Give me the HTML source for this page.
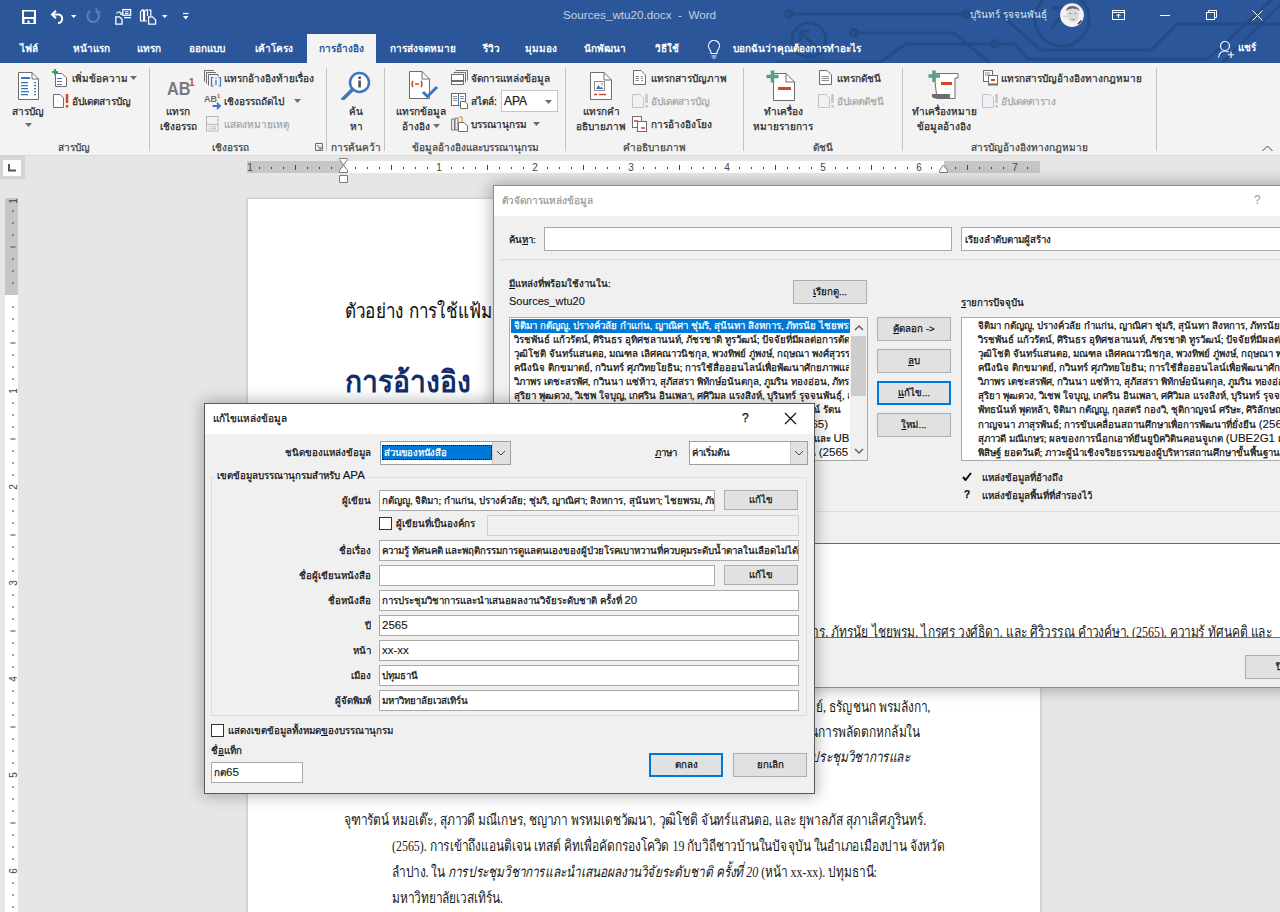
<!DOCTYPE html>
<html><head><meta charset="utf-8">
<style>
*{box-sizing:border-box;margin:0;padding:0}
html,body{width:1280px;height:912px;overflow:hidden}
body{position:relative;-webkit-text-stroke-width:0.25px;background:#e6e6e6;font-family:"Liberation Sans",sans-serif;font-size:11px;color:#222}
.a{position:absolute;white-space:nowrap}
#title{left:0;top:0;width:1280px;height:63px;background:#2b579a}
.tab{position:absolute;top:42px;color:#fff;font-size:10px;line-height:14px;font-weight:bold;-webkit-text-stroke-width:0}
#ribbon{left:0;top:63px;width:1280px;height:93px;background:#f3f3f3;border-bottom:1px solid #d6d6d6}
.sep{position:absolute;top:68px;width:1px;height:83px;background:#c4c4c4}
.rt{position:absolute;font-size:10px;line-height:13px;color:#262626;white-space:nowrap}
.gl{position:absolute;top:141px;font-size:10px;line-height:13px;color:#444;white-space:nowrap;transform:translateX(-50%)}
.cl{transform:translateX(-50%);text-align:center}
.dis{color:#a6a6a6}
.dt{position:absolute;white-space:nowrap;font-family:"Liberation Serif",serif;font-size:15px;line-height:20px;color:#1a1a1a;-webkit-text-stroke-width:0;transform:scaleX(.795);transform-origin:0 0}
.dtr{position:absolute;white-space:nowrap;font-family:"Liberation Serif",serif;font-size:15px;line-height:20px;color:#1a1a1a;-webkit-text-stroke-width:0;transform:scaleX(.795);transform-origin:100% 0}

.dlg{position:absolute;background:#f0f0f0;border:1px solid #8c8c8c;box-shadow:0 0 14px 2px rgba(0,0,0,.28)}
.dt9{position:absolute;white-space:nowrap;font-size:9.7px;line-height:13px;color:#111}
.tb{position:absolute;background:#fff;border:1px solid #a9a9a9}
.btn{position:absolute;background:#e1e1e1;border:1px solid #adadad;font-size:9.7px;line-height:13px;color:#111;text-align:center;white-space:nowrap}
.lst{position:absolute;background:#fff;border:1px solid #a9a9a9;overflow:hidden}
.row{position:absolute;left:0;height:14px;font-size:9.7px;line-height:14px;white-space:nowrap;color:#111}
u{text-decoration:underline}
.lat{font-size:11.5px;-webkit-text-stroke-width:0.1px}

</style></head><body>

<!-- TITLE BAR -->
<div id="title" class="a"></div>
<svg class="a" style="left:0;top:0" width="1280" height="63">
 <g fill="none" stroke="#234b86" stroke-width="3">
  <path d="M789 14 H966"/>
  <circle cx="789" cy="14" r="3.5"/><circle cx="966" cy="14" r="3.5"/>
  <path d="M854 33 H954 L990 63"/>
  <circle cx="854" cy="33" r="3.5"/>
  <path d="M776 62 H880 L906 44 H995"/>
  <circle cx="995" cy="44" r="3.5"/>
  <circle cx="809" cy="40" r="17"/>
  <path d="M800 31 L818 49 M800 31 V41 M800 31 H810"/>
  <path d="M966 14 H1000 L1041 50 H1151 L1177 24 H1280"/>
  <path d="M995 44 H1015 L1028 59 H1208 L1280 -8"/>
  <path d="M1222 63 L1288 -3"/>
  <circle cx="1062" cy="19" r="27"/>
  <path d="M1052 28 L1068 8 M1052 8 H1068 V22"/>
 </g>
</svg>
<!-- QAT -->
<svg class="a" style="left:0;top:0" width="200" height="34">
 <g fill="none" stroke="#fff" stroke-width="1.6">
 </g>
 <rect x="22" y="10" width="14" height="14" fill="#fff"/>
 <rect x="24" y="11.5" width="10" height="5.5" fill="#2b579a"/>
 <rect x="24.5" y="19" width="9" height="4" fill="#2b579a"/>
 <rect x="27.5" y="20.5" width="2" height="2.5" fill="#fff"/>
 <g fill="none" stroke="#fff" stroke-width="2">
  <path d="M52.5 14.5 H58.5 A4.3 4.3 0 0 1 58.5 23 H58"/>
  <path d="M56 10.8 L52 14.5 L56 18.2"/>
 </g>
 <path d="M71 15 H76.5 L73.75 18Z" fill="#fff"/>
 <g fill="none" stroke="#5b7fb8" stroke-width="2"><path d="M97 11.8 A5.8 5.8 0 1 1 90.5 11"/><path d="M96.5 8.3 V12.3 H100.5"/></g>
 <g>
 <g fill="none" stroke="#fff" stroke-width="1.2">
  <path d="M115.8 16.8 H119.5 L122 19.3 V24.2 H115.8Z" stroke-width="1.3"/>
  <rect x="122.8" y="9.6" width="7.8" height="5.6" stroke-width="1.3"/>
  <path d="M125 11.8 H128.5 M125 13.5 H128.5 M124 17.6 H131" stroke-width="1.1"/>
  <path d="M116.2 13.5 Q118.5 10.5 121 13.2" stroke-width="1.1"/>
  <path d="M119.8 13.8 L121.3 14.6 L121.8 12.6" stroke-width="1"/>
  <path d="M140.5 12 Q142 9.5 143.5 10 V21 H140.5Z M144.5 11 Q146 9.5 147.5 10 V16 M144.5 11 V21 H147" stroke-width="1.2"/>
  <path d="M148.5 10 H150.8 V16" stroke-width="1.2"/>
  <path d="M148.6 16.8 H152.5 L155.6 19.9 V24.2 H148.6Z" stroke-width="1.3"/>
 </g>
 <path d="M162 15 H167.5 L164.75 18Z" fill="#fff"/>
 <path d="M183 13.5 H188.5" stroke="#fff" stroke-width="1.2"/><path d="M183 16 H188.5 L185.75 19.5Z" fill="#fff"/>
</svg>
<!-- window controls -->
<svg class="a" style="left:1100px;top:0" width="180" height="34">
 <g fill="none" stroke="#fff" stroke-width="1">
  <rect x="12.5" y="10.5" width="12" height="9"/><path d="M12.5 12.5 H24.5 M18.5 18 V14 M16.5 16 L18.5 14 L20.5 16"/>
  <path d="M60 15.5 H70"/>
  <rect x="106.5" y="12.5" width="8" height="7"/><path d="M108.5 12.5 V10.5 H116.5 V17.5 H114.5"/>
  <path d="M152.5 10.5 L162.5 20.5 M162.5 10.5 L152.5 20.5"/>
 </g>
</svg>
<div class="a" style="left:970px;top:8px;font-size:10px;line-height:14px;color:#dce4f0;-webkit-text-stroke-width:0">บุรินทร์ รุจจนพันธุ์</div>
<svg class="a" style="left:1060px;top:3px" width="25" height="25">
 <circle cx="12" cy="12.1" r="11.9" fill="#f2f2f2"/>
 <ellipse cx="13" cy="12" rx="6" ry="7" fill="#d9d9d9"/>
 <path d="M6 8 Q7 3 12 3 Q18 3 20 8 Q17 5 12 5.5 Q8 6 6 8Z" fill="#6a6a6a"/>
 <path d="M9 10.5 H11.5 M14 10.5 H16.5 M11 16.5 H15" stroke="#9a9a9a" stroke-width="1"/>
 <path d="M3 14 Q5 12 7 14" stroke="#c8c8c8" stroke-width="1" fill="none"/>
 <path d="M18 21 L21.5 17.5" stroke="#222" stroke-width="1.3"/>
</svg>
<svg class="a" style="left:705.5px;top:40px" width="16" height="20">
 <g fill="none" stroke="#fff" stroke-width="1.1"><path d="M5 13.5 Q5 11 3.5 9 A5.5 5.5 0 1 1 12.5 9 Q11 11 11 13.5 Z"/><path d="M5.5 16 H10.5 M6.5 18 H9.5"/></g>
</svg>
<svg class="a" style="left:1217px;top:40px" width="19" height="19">
 <g fill="none" stroke="#fff" stroke-width="1.2"><circle cx="8" cy="6" r="4.5"/><path d="M1.5 17.5 Q2.5 11 8 11 Q10 11 11.5 12"/><path d="M14 11.5 V18 M10.8 14.75 H17.2"/></g>
</svg>
<div class="a" style="left:563px;top:8px;font-size:11.7px;line-height:14px;color:#c3cee2;-webkit-text-stroke-width:0">Sources_wtu20.docx&nbsp; - &nbsp;Word</div>

<!-- TAB ROW -->
<div class="a" style="left:307px;top:34px;width:69px;height:30px;background:#f3f3f3"></div>
<div class="tab" style="left:20px">ไฟล์</div>
<div class="tab" style="left:73px">หน้าแรก</div>
<div class="tab" style="left:137px">แทรก</div>
<div class="tab" style="left:189px">ออกแบบ</div>
<div class="tab" style="left:255px">เค้าโครง</div>
<div class="tab" style="left:319px;color:#2b579a">การอ้างอิง</div>
<div class="tab" style="left:390px">การส่งจดหมาย</div>
<div class="tab" style="left:483px">รีวิว</div>
<div class="tab" style="left:525px">มุมมอง</div>
<div class="tab" style="left:584px">นักพัฒนา</div>
<div class="tab" style="left:655px">วิธีใช้</div>
<div class="tab" style="left:733px">บอกฉันว่าคุณต้องการทำอะไร</div>
<div class="tab" style="left:1238px;top:41px;font-weight:bold">แชร์</div>

<!-- RIBBON -->
<div id="ribbon" class="a"></div>
<div class="sep" style="left:149px"></div>
<div class="sep" style="left:326px"></div>
<div class="sep" style="left:384px"></div>
<div class="sep" style="left:565px"></div>
<div class="sep" style="left:743px"></div>
<div class="sep" style="left:902px"></div>
<div class="sep" style="left:1156px"></div>

<!-- group: TOC -->
<svg class="a" style="left:17px;top:71px" width="24" height="30">
 <path d="M1.5 1.5 H15 L21.5 8 V28.5 H1.5 Z" fill="#fff" stroke="#6d6d6d"/>
 <path d="M15 1.5 V8 H21.5" fill="none" stroke="#6d6d6d"/>
 <g fill="#3a77bd"><rect x="4" y="6" width="9" height="2"/><rect x="4" y="11" width="7" height="1.3"/><rect x="4" y="14" width="7" height="1.3"/><rect x="4" y="17" width="7" height="1.3"/><rect x="4" y="20" width="8" height="1.3"/><rect x="4" y="23" width="7" height="1.3"/>
 <rect x="17" y="11" width="2" height="1.3"/><rect x="17" y="14" width="2" height="1.3"/><rect x="17" y="17" width="2" height="1.3"/><rect x="17" y="20" width="2" height="1.3"/><rect x="17" y="23" width="2" height="1.3"/></g>
</svg>
<div class="rt cl" style="left:28px;top:105px">สารบัญ</div>
<svg class="a" style="left:25px;top:123px" width="7" height="4"><path d="M0 0 H7 L3.5 4Z" fill="#6d6d6d"/></svg>
<svg class="a" style="left:52px;top:69px" width="16" height="18">
 <path d="M3.5 4.5 H10 L14.5 9 V17.5 H3.5 Z" fill="#fff" stroke="#6d6d6d"/>
 <path d="M0 3 H6 M3 0 V6" stroke="#3a9a6e" stroke-width="2"/>
 <g fill="#3a77bd"><rect x="5" y="9" width="5" height="1"/><rect x="5" y="12" width="5" height="1"/><rect x="5" y="15" width="5" height="1"/></g>
</svg>
<div class="rt" style="left:72px;top:71.5px">เพิ่มข้อความ</div>
<svg class="a" style="left:130px;top:76px" width="7" height="4"><path d="M0 0 H7 L3.5 4Z" fill="#6d6d6d"/></svg>
<svg class="a" style="left:52px;top:93px" width="18" height="16">
 <path d="M1.5 1.5 H8 L11.5 5 V14.5 H1.5 Z" fill="#fff" stroke="#6d6d6d"/>
 <path d="M15 1 V10" stroke="#d24726" stroke-width="2.5"/><rect x="13.8" y="12" width="2.5" height="2.5" fill="#d24726"/>
</svg>
<div class="rt" style="left:72px;top:94.5px">อัปเดตสารบัญ</div>
<div class="gl" style="left:74px">สารบัญ</div>

<!-- group: footnotes -->
<div class="a" style="left:167px;top:78.5px;font-size:18.5px;font-weight:bold;color:#7a7a7a;line-height:20px;-webkit-text-stroke-width:0;transform:scaleX(.88);transform-origin:0 0">AB</div>
<div class="a" style="left:189px;top:77px;font-size:10px;font-weight:bold;color:#d24726;line-height:11px;-webkit-text-stroke-width:0">1</div>
<div class="rt cl" style="left:178px;top:105px">แทรก</div>
<div class="rt cl" style="left:178px;top:119.5px">เชิงอรรถ</div>
<svg class="a" style="left:200px;top:66px" width="24" height="24">
 <path d="M4.5 15.5 V4.5 H14 M6.5 17.5 V6.5 H16 M8.5 19.5 V8.5 H18 V10.5" fill="none" stroke="#6d6d6d" stroke-width="1"/>
 <path d="M13.5 11.5 H11.5 V20 H13.5 M18.5 11.5 H20.5 V20 H18.5" fill="none" stroke="#3a77bd" stroke-width="1.2"/>
 <path d="M16 14 V19 M16 12 V13" stroke="#3a77bd" stroke-width="1.3"/>
</svg>
<div class="rt" style="left:223.5px;top:71.5px">แทรกอ้างอิงท้ายเรื่อง</div>
<div class="a" style="left:204px;top:94px;font-size:9px;font-weight:bold;color:#6d6d6d;line-height:10px;-webkit-text-stroke-width:0">AB</div>
<div class="a" style="left:217px;top:92.5px;font-size:6px;font-weight:bold;color:#d24726;line-height:7px;-webkit-text-stroke-width:0">1</div>
<svg class="a" style="left:212px;top:102px" width="10" height="8"><path d="M0.5 4 H8 M5 1 L8 4 L5 7" fill="none" stroke="#3a77bd" stroke-width="1.8"/></svg>
<div class="rt" style="left:223.5px;top:94.5px">เชิงอรรถถัดไป</div>
<svg class="a" style="left:294px;top:99px" width="7" height="4"><path d="M0 0 H7 L3.5 4Z" fill="#6d6d6d"/></svg>
<svg class="a" style="left:205px;top:116px" width="14" height="16">
 <rect x="1.5" y="0.5" width="11.5" height="14.5" fill="#f3eff5" stroke="#b8b8b8"/>
 <path d="M1.5 8.5 H13" stroke="#b8b8b8"/>
 <path d="M3.5 10.8 H4.5 M3.5 12.8 H4.5 M6 10.8 H11 M6 12.8 H11" stroke="#b8b8b8"/>
</svg>
<div class="rt dis" style="left:223.5px;top:117.5px">แสดงหมายเหตุ</div>
<div class="gl" style="left:230px">เชิงอรรถ</div>
<svg class="a" style="left:315px;top:143px" width="8" height="8"><path d="M0.5 0.5 H7.5 V7.5 H0.5Z M2 2 L6 6 M6 3.5 V6 H3.5" fill="none" stroke="#6d6d6d"/></svg>

<!-- group: research -->
<svg class="a" style="left:340px;top:71px" width="31" height="29">
 <circle cx="19.5" cy="11.5" r="9.5" fill="#fff" stroke="#3a77bd" stroke-width="2.5"/>
 <path d="M12.5 18.5 L3 28" stroke="#3a77bd" stroke-width="3.5" stroke-linecap="round"/>
 <rect x="18.3" y="9.5" width="2.6" height="7" fill="#505050"/><rect x="18.3" y="5.5" width="2.6" height="2.6" fill="#505050"/>
</svg>
<div class="rt cl" style="left:356px;top:105px">ค้น</div>
<div class="rt cl" style="left:356px;top:119.5px">หา</div>
<div class="gl" style="left:355.5px">การค้นคว้า</div>

<!-- group: citations -->
<svg class="a" style="left:409px;top:71px" width="30" height="30">
 <path d="M0.5 0.5 H13 L20.5 8 V27.5 H0.5 Z" fill="#fff" stroke="#6d6d6d"/>
 <path d="M13 0.5 V8 H20.5" fill="none" stroke="#6d6d6d"/>
 <path d="M4 10 Q2 13 4 16 M12 10 Q14 13 12 16 M6 13 H10" fill="none" stroke="#d24726" stroke-width="1.5"/>
 <path d="M14 21 L18.5 25.5 L28 16" fill="none" stroke="#3a77bd" stroke-width="3"/>
</svg>
<div class="rt cl" style="left:421px;top:105px">แทรกข้อมูล</div>
<div class="rt cl" style="left:416px;top:119.5px">อ้างอิง</div>
<svg class="a" style="left:433px;top:124px" width="7" height="4"><path d="M0 0 H7 L3.5 4Z" fill="#6d6d6d"/></svg>
<svg class="a" style="left:451px;top:70px" width="17" height="16">
 <path d="M4.5 0.5 H16.5 V10.5 M2.5 2.5 H14.5 V12.5" fill="none" stroke="#6d6d6d"/>
 <rect x="0.5" y="4.5" width="12" height="10" fill="#fff" stroke="#6d6d6d"/>
 <path d="M1 11 H12" stroke="#6d6d6d" stroke-width="2"/>
</svg>
<div class="rt" style="left:471px;top:71.5px">จัดการแหล่งข้อมูล</div>
<svg class="a" style="left:451px;top:93px" width="17" height="16">
 <rect x="0.5" y="0.5" width="7" height="12" fill="#fff" stroke="#3a77bd"/>
 <rect x="7.5" y="0.5" width="7" height="12" fill="#fff" stroke="#3a77bd"/>
 <path d="M2 3.5 H6 M2 5.5 H6 M2 7.5 H6 M9 3.5 H13 M9 5.5 H13" stroke="#909090"/>
 <path d="M9.5 8.5 H14 L16.5 11 V15.5 H9.5Z" fill="#fff" stroke="#6d6d6d"/>
</svg>
<div class="rt" style="left:471px;top:94.5px">สไตล์:</div>
<div class="a" style="left:501px;top:90px;width:57px;height:22px;background:#fff;border:1px solid #c6c6c6"></div>
<div class="a" style="left:504px;top:94px;font-size:12px;line-height:14px;color:#222">APA</div>
<svg class="a" style="left:545px;top:100px" width="7" height="4"><path d="M0 0 H7 L3.5 4Z" fill="#6d6d6d"/></svg>
<svg class="a" style="left:451px;top:116px" width="17" height="16">
 <path d="M0.5 3 H3.5 V14 H0.5Z M4 2 H7 V14 H4Z" fill="#e8e8e8" stroke="#7a7a7a"/>
 <path d="M8 0.5 L11 1.5 V6" stroke="#e8a33d" stroke-width="1.5" fill="none"/>
 <path d="M7.5 6.5 H13 L16.5 10 V15.5 H7.5Z" fill="#fff" stroke="#6d6d6d"/>
</svg>
<div class="rt" style="left:471px;top:117.5px">บรรณานุกรม</div>
<svg class="a" style="left:533px;top:122px" width="7" height="4"><path d="M0 0 H7 L3.5 4Z" fill="#6d6d6d"/></svg>
<div class="gl" style="left:475px">ข้อมูลอ้างอิงและบรรณานุกรม</div>

<!-- group: captions -->
<svg class="a" style="left:590px;top:72px" width="23" height="29">
 <path d="M0.5 0.5 H14 L21.5 8 V27.5 H0.5 Z" fill="#fff" stroke="#6d6d6d"/>
 <path d="M14 0.5 V8 H21.5" fill="none" stroke="#6d6d6d"/>
 <rect x="4.5" y="9.5" width="10" height="9" fill="#fff" stroke="#909090"/>
 <path d="M6 17 L8.5 13 L11 17Z M9.5 17 L11.5 14.5 L13.5 17Z" fill="#3a77bd"/>
 <circle cx="12" cy="12" r="1.2" fill="#e8b84a"/>
 <path d="M4 22.5 H7 M9 22.5 H16" stroke="#d24726" stroke-width="1.5"/>
</svg>
<div class="rt cl" style="left:601px;top:105px">แทรกคำ</div>
<div class="rt cl" style="left:601px;top:119.5px">อธิบายภาพ</div>
<svg class="a" style="left:633px;top:70px" width="14" height="16">
 <path d="M0.5 0.5 H8 L12.5 5 V14.5 H0.5 Z" fill="#fff" stroke="#6d6d6d"/>
 <path d="M2.5 6.5 H6 M2.5 8.5 H6 M2.5 10.5 H6 M8 6.5 H10 M8 8.5 H10 M8 10.5 H10" stroke="#909090"/>
</svg>
<div class="rt" style="left:651px;top:71.5px">แทรกสารบัญภาพ</div>
<svg class="a" style="left:632px;top:93px" width="17" height="16">
 <path d="M0.5 1.5 H8 L11.5 5 V14.5 H0.5 Z" fill="#f3f0f5" stroke="#c4c4c4"/>
 <path d="M14.5 1 V10" stroke="#c4c4c4" stroke-width="2.5"/><rect x="13.3" y="12" width="2.5" height="2.5" fill="#c4c4c4"/>
</svg>
<div class="rt dis" style="left:651px;top:94.5px">อัปเดตสารบัญ</div>
<svg class="a" style="left:632px;top:116px" width="16" height="16">
 <rect x="0.5" y="0.5" width="9" height="11" fill="#fff" stroke="#6d6d6d"/>
 <rect x="5.5" y="5.5" width="9" height="10" fill="#fff" stroke="#6d6d6d"/>
 <path d="M2 5 H6 M9 12 H13" stroke="#d24726" stroke-width="1.5"/>
</svg>
<div class="rt" style="left:651px;top:117.5px">การอ้างอิงโยง</div>
<div class="gl" style="left:654px">คำอธิบายภาพ</div>

<!-- group: index -->
<svg class="a" style="left:766px;top:70px" width="30" height="31">
 <path d="M7.5 3.5 H20 L28.5 12 V30.5 H7.5 Z" fill="#fff" stroke="#6d6d6d"/>
 <path d="M20 3.5 V12 H28.5" fill="none" stroke="#6d6d6d"/>
 <path d="M0.5 6.5 H12.5 M6.5 0.5 V12.5" stroke="#5a9e86" stroke-width="3.5"/>
 <rect x="12" y="17" width="13" height="3" fill="#d24726"/>
</svg>
<div class="rt cl" style="left:783px;top:105px">ทำเครื่อง</div>
<div class="rt cl" style="left:783px;top:119.5px">หมายรายการ</div>
<svg class="a" style="left:819px;top:70px" width="14" height="16">
 <path d="M0.5 0.5 H8 L12.5 5 V14.5 H0.5 Z" fill="#fff" stroke="#6d6d6d"/>
 <path d="M2.5 6.5 H10 M2.5 8.5 H10 M2.5 10.5 H10" stroke="#909090"/>
</svg>
<div class="rt" style="left:837px;top:71.5px">แทรกดัชนี</div>
<svg class="a" style="left:818px;top:93px" width="17" height="16">
 <path d="M0.5 1.5 H8 L11.5 5 V14.5 H0.5 Z" fill="#f3f0f5" stroke="#c4c4c4"/>
 <path d="M14.5 1 V10" stroke="#c4c4c4" stroke-width="2.5"/><rect x="13.3" y="12" width="2.5" height="2.5" fill="#c4c4c4"/>
</svg>
<div class="rt dis" style="left:837px;top:94.5px">อัปเดตดัชนี</div>
<div class="gl" style="left:823px">ดัชนี</div>

<!-- group: table of authorities -->
<svg class="a" style="left:928px;top:70px" width="32" height="30">
 <path d="M6 3.5 H30 V8 H27 V28.5 H9 Z" fill="#fff" stroke="#6d6d6d"/>
 <path d="M4 24 H22 V28.5 H8 Q4 28.5 4 26Z" fill="#6d6d6d"/>
 <path d="M0.5 6 H12 M6 0.5 V12" stroke="#5a9e86" stroke-width="3.5"/>
 <rect x="13" y="12" width="11" height="3" fill="#d24726"/>
</svg>
<div class="rt cl" style="left:944px;top:105px">ทำเครื่องหมาย</div>
<div class="rt cl" style="left:944px;top:119.5px">ข้อมูลอ้างอิง</div>
<svg class="a" style="left:983px;top:70px" width="16" height="16">
 <rect x="0.5" y="0.5" width="9" height="11" fill="#fff" stroke="#6d6d6d"/>
 <path d="M2 3 H7 M2 5 H7" stroke="#909090"/>
 <rect x="5.5" y="5.5" width="9" height="9" fill="#fff" stroke="#6d6d6d"/>
 <rect x="8" y="9" width="4" height="2" fill="#d24726"/>
 <path d="M5 14.5 H15" stroke="#6d6d6d" stroke-width="2"/>
</svg>
<div class="rt" style="left:1001px;top:71.5px">แทรกสารบัญอ้างอิงทางกฎหมาย</div>
<svg class="a" style="left:982px;top:93px" width="17" height="16">
 <path d="M0.5 1.5 H8 L11.5 5 V14.5 H0.5 Z" fill="#f3f0f5" stroke="#c4c4c4"/>
 <path d="M14.5 1 V10" stroke="#c4c4c4" stroke-width="2.5"/><rect x="13.3" y="12" width="2.5" height="2.5" fill="#c4c4c4"/>
</svg>
<div class="rt dis" style="left:1001px;top:94.5px">อัปเดตตาราง</div>
<div class="gl" style="left:1029px">สารบัญอ้างอิงทางกฎหมาย</div>
<svg class="a" style="left:1262px;top:145px" width="11" height="7"><path d="M0.5 6 L5.5 1 L10.5 6" fill="none" stroke="#444" stroke-width="1"/></svg>

<!-- DOC AREA -->
<div class="a" style="left:0;top:155px;width:25px;height:24px;background:#d4d4d4"></div>
<div class="a" style="left:3px;top:160px;width:18px;height:16px;background:#fff"></div>
<svg class="a" style="left:8px;top:164px" width="9" height="8"><path d="M1 0 V6.5 H8" fill="none" stroke="#555" stroke-width="2"/></svg>
<svg class="a" style="left:0;top:0" width="1280" height="912">
 <rect x="247" y="161" width="793" height="12" fill="#c6c6c6"/>
 <rect x="343" y="161" width="601" height="12" fill="#fff"/>
 <rect x="5" y="198" width="13" height="714" fill="#fff"/>
 <rect x="5" y="198" width="13" height="97" fill="#c6c6c6"/>
 <g fill="#444" font-family="Liberation Sans" style="-webkit-text-stroke-width:0">
<text x="250" y="171" font-size="10" text-anchor="middle">1</text>
<text x="13" y="201" font-size="10" text-anchor="middle" transform="rotate(-90 13 201)" dominant-baseline="central">1</text>
<rect x="259" y="167" width="1" height="2"/>
<rect x="271" y="167" width="1" height="2"/>
<rect x="283" y="167" width="1" height="2"/>
<rect x="295" y="165" width="1" height="5"/>
<rect x="307" y="167" width="1" height="2"/>
<rect x="319" y="167" width="1" height="2"/>
<rect x="331" y="167" width="1" height="2"/>
<rect x="355" y="167" width="1" height="2"/>
<rect x="367" y="167" width="1" height="2"/>
<rect x="379" y="167" width="1" height="2"/>
<rect x="391" y="165" width="1" height="5"/>
<rect x="403" y="167" width="1" height="2"/>
<rect x="415" y="167" width="1" height="2"/>
<rect x="427" y="167" width="1" height="2"/>
<text x="439" y="171" font-size="10" text-anchor="middle">1</text>
<rect x="451" y="167" width="1" height="2"/>
<rect x="463" y="167" width="1" height="2"/>
<rect x="475" y="167" width="1" height="2"/>
<rect x="487" y="165" width="1" height="5"/>
<rect x="499" y="167" width="1" height="2"/>
<rect x="511" y="167" width="1" height="2"/>
<rect x="523" y="167" width="1" height="2"/>
<text x="535" y="171" font-size="10" text-anchor="middle">2</text>
<rect x="547" y="167" width="1" height="2"/>
<rect x="559" y="167" width="1" height="2"/>
<rect x="571" y="167" width="1" height="2"/>
<rect x="583" y="165" width="1" height="5"/>
<rect x="595" y="167" width="1" height="2"/>
<rect x="607" y="167" width="1" height="2"/>
<rect x="619" y="167" width="1" height="2"/>
<text x="631" y="171" font-size="10" text-anchor="middle">3</text>
<rect x="643" y="167" width="1" height="2"/>
<rect x="655" y="167" width="1" height="2"/>
<rect x="667" y="167" width="1" height="2"/>
<rect x="679" y="165" width="1" height="5"/>
<rect x="691" y="167" width="1" height="2"/>
<rect x="703" y="167" width="1" height="2"/>
<rect x="715" y="167" width="1" height="2"/>
<text x="727" y="171" font-size="10" text-anchor="middle">4</text>
<rect x="739" y="167" width="1" height="2"/>
<rect x="751" y="167" width="1" height="2"/>
<rect x="763" y="167" width="1" height="2"/>
<rect x="775" y="165" width="1" height="5"/>
<rect x="787" y="167" width="1" height="2"/>
<rect x="799" y="167" width="1" height="2"/>
<rect x="811" y="167" width="1" height="2"/>
<text x="823" y="171" font-size="10" text-anchor="middle">5</text>
<rect x="835" y="167" width="1" height="2"/>
<rect x="847" y="167" width="1" height="2"/>
<rect x="859" y="167" width="1" height="2"/>
<rect x="871" y="165" width="1" height="5"/>
<rect x="883" y="167" width="1" height="2"/>
<rect x="895" y="167" width="1" height="2"/>
<rect x="907" y="167" width="1" height="2"/>
<text x="919" y="171" font-size="10" text-anchor="middle">6</text>
<rect x="931" y="167" width="1" height="2"/>
<rect x="943" y="167" width="1" height="2"/>
<rect x="955" y="167" width="1" height="2"/>
<rect x="967" y="165" width="1" height="5"/>
<rect x="979" y="167" width="1" height="2"/>
<rect x="991" y="167" width="1" height="2"/>
<rect x="1003" y="167" width="1" height="2"/>
<text x="1015" y="171" font-size="10" text-anchor="middle">7</text>
<rect x="1027" y="167" width="1" height="2"/>
<rect x="12" y="210.5" width="2" height="1"/>
<rect x="12" y="222.5" width="2" height="1"/>
<rect x="12" y="234.5" width="2" height="1"/>
<rect x="10.5" y="246.5" width="5" height="1"/>
<rect x="12" y="258.5" width="2" height="1"/>
<rect x="12" y="270.5" width="2" height="1"/>
<rect x="12" y="282.5" width="2" height="1"/>
<rect x="12" y="306.5" width="2" height="1"/>
<rect x="12" y="318.5" width="2" height="1"/>
<rect x="12" y="330.5" width="2" height="1"/>
<rect x="10.5" y="342.5" width="5" height="1"/>
<rect x="12" y="354.5" width="2" height="1"/>
<rect x="12" y="366.5" width="2" height="1"/>
<rect x="12" y="378.5" width="2" height="1"/>
<text x="13" y="391" font-size="10" text-anchor="middle" transform="rotate(-90 13 391)" dominant-baseline="central">1</text>
<rect x="12" y="402.5" width="2" height="1"/>
<rect x="12" y="414.5" width="2" height="1"/>
<rect x="12" y="426.5" width="2" height="1"/>
<rect x="10.5" y="438.5" width="5" height="1"/>
<rect x="12" y="450.5" width="2" height="1"/>
<rect x="12" y="462.5" width="2" height="1"/>
<rect x="12" y="474.5" width="2" height="1"/>
<text x="13" y="487" font-size="10" text-anchor="middle" transform="rotate(-90 13 487)" dominant-baseline="central">2</text>
<rect x="12" y="498.5" width="2" height="1"/>
<rect x="12" y="510.5" width="2" height="1"/>
<rect x="12" y="522.5" width="2" height="1"/>
<rect x="10.5" y="534.5" width="5" height="1"/>
<rect x="12" y="546.5" width="2" height="1"/>
<rect x="12" y="558.5" width="2" height="1"/>
<rect x="12" y="570.5" width="2" height="1"/>
<text x="13" y="583" font-size="10" text-anchor="middle" transform="rotate(-90 13 583)" dominant-baseline="central">3</text>
<rect x="12" y="594.5" width="2" height="1"/>
<rect x="12" y="606.5" width="2" height="1"/>
<rect x="12" y="618.5" width="2" height="1"/>
<rect x="10.5" y="630.5" width="5" height="1"/>
<rect x="12" y="642.5" width="2" height="1"/>
<rect x="12" y="654.5" width="2" height="1"/>
<rect x="12" y="666.5" width="2" height="1"/>
<text x="13" y="679" font-size="10" text-anchor="middle" transform="rotate(-90 13 679)" dominant-baseline="central">4</text>
<rect x="12" y="690.5" width="2" height="1"/>
<rect x="12" y="702.5" width="2" height="1"/>
<rect x="12" y="714.5" width="2" height="1"/>
<rect x="10.5" y="726.5" width="5" height="1"/>
<rect x="12" y="738.5" width="2" height="1"/>
<rect x="12" y="750.5" width="2" height="1"/>
<rect x="12" y="762.5" width="2" height="1"/>
<text x="13" y="775" font-size="10" text-anchor="middle" transform="rotate(-90 13 775)" dominant-baseline="central">5</text>
<rect x="12" y="786.5" width="2" height="1"/>
<rect x="12" y="798.5" width="2" height="1"/>
<rect x="12" y="810.5" width="2" height="1"/>
<rect x="10.5" y="822.5" width="5" height="1"/>
<rect x="12" y="834.5" width="2" height="1"/>
<rect x="12" y="846.5" width="2" height="1"/>
<rect x="12" y="858.5" width="2" height="1"/>
<text x="13" y="871" font-size="10" text-anchor="middle" transform="rotate(-90 13 871)" dominant-baseline="central">6</text>
<rect x="12" y="882.5" width="2" height="1"/>
<rect x="12" y="894.5" width="2" height="1"/>
<rect x="12" y="906.5" width="2" height="1"/>
 </g>
 <path d="M339.5 158.5 H347.5 V159.5 L343.5 165 L339.5 159.5Z M343.5 165 L347.5 170.5 V172.5 H339.5 V170.5Z M339.5 175.5 H347.5 V182.5 H339.5Z" fill="#fff" stroke="#7a7a7a"/>
 <path d="M943.5 165 L947.5 170.5 V172.5 H939.5 V170.5Z" fill="#fff" stroke="#7a7a7a"/>
</svg>
<div class="a" style="left:247px;top:198px;width:794px;height:714px;background:#fff;border:1px solid #d0d0d0;border-bottom:0;box-shadow:0 0 3px rgba(0,0,0,.12)"></div>


<!-- DOCUMENT TEXT -->
<div class="a" style="left:345px;top:299px;font-size:20px;line-height:24px;color:#111;-webkit-text-stroke-width:0.1px;transform:scaleX(.852);transform-origin:0 0">ตัวอย่าง การใช้แฟ้ม</div>
<div class="a" style="left:345px;top:363.5px;font-size:30px;font-weight:bold;line-height:36px;color:#132d6b;-webkit-text-stroke-width:0;transform:scaleX(.94);transform-origin:0 0">การอ้างอิง</div>
<div class="dt" style="left:344px;top:810px">จุฑารัตน์ หมอเต๊ะ, สุภาวดี มณีเกษร, ชญาภา พรหมเดชวัฒนา, วุฒิโชติ จันทร์แสนตอ, และ ยุพาลภัส สุภาเลิศภูรินทร์.</div>
<div class="dt" style="left:392px;top:836px">(2565). การเข้าถึงแอนติเจน เทสต์ คิทเพื่อคัดกรองโควิด 19 กับวิถีชาวบ้านในปัจจุบัน ในอำเภอเมืองปาน จังหวัด</div>
<div class="dt" style="left:392px;top:862px">ลำปาง. ใน <i>การประชุมวิชาการและนำเสนอผลงานวิจัยระดับชาติ ครั้งที่ 20</i> (หน้า xx-xx). ปทุมธานี:</div>
<div class="dt" style="left:392px;top:888px">มหาวิทยาลัยเวสเทิร์น.</div>
<div class="dtr" style="right:350px;top:697px">ธ์ เพิ่มพูล, ศิริวรรณ คำวงค์ษา, ภูริชญา ภู่พรมมาย์, ธรัญชนก พรมลังกา,</div>
<div class="dtr" style="right:360px;top:722px">ดูแลตนเองของผู้ป่วยโรคเบาหวานเพื่อป้องกันการพลัดตกหกล้มใน</div>
<div class="dtr" style="right:370px;top:747px"><i>ในการประชุมวิชาการและ</i></div>

<!-- SOURCE MANAGER DIALOG -->
<div class="dlg" style="left:493px;top:185px;width:800px;height:503px"></div>
<div class="a" style="left:494px;top:186px;width:786px;height:30px;background:#fff"></div>
<div class="a" style="left:502px;top:194px;font-size:10px;line-height:14px;color:#9a9a9a">ตัวจัดการแหล่งข้อมูล</div>
<div class="a" style="left:1254px;top:193px;font-size:12px;line-height:14px;color:#9a9a9a;-webkit-text-stroke-width:0">?</div>
<div class="dt9" style="left:509px;top:233px">ค้น<u>ห</u>า:</div>
<div class="tb" style="left:544px;top:227px;width:408px;height:24px"></div>
<div class="tb" style="left:961px;top:227px;width:340px;height:24px"></div>
<div class="dt9" style="left:965px;top:233px">เรียงลำดับตามผู้สร้าง</div>
<div class="a" style="left:500px;top:259px;width:780px;height:1px;background:#dcdcdc"></div>
<div class="dt9" style="left:509px;top:277px"><u>มี</u>แหล่งที่พร้อมใช้งานใน:</div>
<div class="a" style="left:509px;top:294px;font-size:11px;line-height:14px;color:#111;-webkit-text-stroke-width:0.1px">Sources_wtu20</div>
<div class="btn" style="left:793px;top:280px;width:74px;height:24px;line-height:22px"><u>เ</u>รียกดู...</div>
<div class="lst" style="left:509px;top:317px;width:359px;height:144px">
 <div class="a" style="left:1px;top:1px;width:339px;height:14px;background:#0078d7"></div>
 <div class="a" style="left:340px;top:1px;width:17px;height:141px;background:#f0f0f0"></div>
 <div class="a" style="left:341px;top:18px;width:15px;height:60px;background:#cdcdcd"></div>
 <svg class="a" style="left:344px;top:6px" width="10" height="7"><path d="M1 6 L5 2 L9 6" fill="none" stroke="#606060" stroke-width="1.5"/></svg>
 <svg class="a" style="left:344px;top:130px" width="10" height="7"><path d="M1 1 L5 5 L9 1" fill="none" stroke="#606060" stroke-width="1.5"/></svg>
 <div style="position:absolute;left:4px;top:1px;width:335px;overflow:hidden">
  <div class="row" style="position:relative;color:#fff">จิติมา กตัญญู, ปรางค์วลัย กำแก่น, ญาณิศา ชุ่มริ, สุนันทา สิงหการ, ภัทรนัย ไชยพรม</div>
  <div class="row" style="position:relative">วิรชพันธ์ แก้วรัตน์, ศิรินธร อุทิศชลานนท์, ภัชรชาติ ทูรวัฒน์; ปัจจัยที่มีผลต่อการตัดสินใจ</div>
  <div class="row" style="position:relative">วุฒิโชติ จันทร์แสนตอ, มณฑล เลิศคณาวนิชกุล, พวงทิพย์ ภู่พงษ์, กฤษณา พงศ์สุวรรณ</div>
  <div class="row" style="position:relative">คนึงนิจ ติกขมาตย์, กวินทร์ ศุภวิทยโยธิน; การใช้สื่อออนไลน์เพื่อพัฒนาศักยภาพและ</div>
  <div class="row" style="position:relative">วิภาพร เตชะสรพัศ, กวินนา แซ่ห้าว, สุภัสสรา พิทักษ์อนันตกุล, ภูมริน ทองอ่อน, ภัทร</div>
  <div class="row" style="position:relative">สุริยา พุฒดวง, วิเชพ ใจบุญ, เกศริน อินเพลา, ศศิวิมล แรงสิงห์, บุรินทร์ รุจจนพันธุ์, ลลิตา</div>
  <div class="row" style="position:relative">พัทธนันท์ พุดหล้า, จิติมา กตัญญู, กุลสตรี กองวิ, ชุติกาญจน์ ศรีษะ, ศิริลักษณ์ รัตน</div>
  <div class="row" style="position:relative">กาญจนา ภาสุรพันธ์; การขับเคลื่อนสถานศึกษาเพื่อการพัฒนาที่ยั่งยืน <span class="lat">(2565)</span></div>
  <div class="row" style="position:relative">สุภาวดี มณีเกษร; ผลของการน็อกเอาท์ยีนยูบิควิตินคอนจูเกต <span class="lat">(UBE2G1</span> และ <span class="lat">UBC</span></div>
  <div class="row" style="position:relative">พิสิษฐ์ ยอดวันดี; ภาวะผู้นำเชิงจริยธรรมของผู้บริหารสถานศึกษาขั้นพื้นฐาน <span class="lat">(2565</span></div>
 </div>
</div>
<div class="btn" style="left:877px;top:317px;width:74px;height:24px;line-height:22px"><u>คั</u>ดลอก -&gt;</div>
<div class="btn" style="left:877px;top:349px;width:74px;height:24px;line-height:22px"><u>ล</u>บ</div>
<div class="btn" style="left:877px;top:381px;width:74px;height:24px;line-height:20px;border:2px solid #0078d7"><u>แ</u>ก้ไข...</div>
<div class="btn" style="left:877px;top:413px;width:74px;height:24px;line-height:22px"><u>ใ</u>หม่...</div>
<div class="dt9" style="left:961px;top:296px"><u>ร</u>ายการปัจจุบัน</div>
<div class="lst" style="left:961px;top:317px;width:340px;height:144px">
 <div style="position:absolute;left:16px;top:1px;width:400px">
  <div class="row" style="position:relative">จิติมา กตัญญู, ปรางค์วลัย กำแก่น, ญาณิศา ชุ่มริ, สุนันทา สิงหการ, ภัทรนัย ไชยพรม</div>
  <div class="row" style="position:relative">วิรชพันธ์ แก้วรัตน์, ศิรินธร อุทิศชลานนท์, ภัชรชาติ ทูรวัฒน์; ปัจจัยที่มีผลต่อการตัดสินใจ</div>
  <div class="row" style="position:relative">วุฒิโชติ จันทร์แสนตอ, มณฑล เลิศคณาวนิชกุล, พวงทิพย์ ภู่พงษ์, กฤษณา พงศ์สุวรรณ</div>
  <div class="row" style="position:relative">คนึงนิจ ติกขมาตย์, กวินทร์ ศุภวิทยโยธิน; การใช้สื่อออนไลน์เพื่อพัฒนาศักยภาพและ</div>
  <div class="row" style="position:relative">วิภาพร เตชะสรพัศ, กวินนา แซ่ห้าว, สุภัสสรา พิทักษ์อนันตกุล, ภูมริน ทองอ่อน, ภัทร</div>
  <div class="row" style="position:relative">สุริยา พุฒดวง, วิเชพ ใจบุญ, เกศริน อินเพลา, ศศิวิมล แรงสิงห์, บุรินทร์ รุจจนพันธุ์, ลลิตา</div>
  <div class="row" style="position:relative">พัทธนันท์ พุดหล้า, จิติมา กตัญญู, กุลสตรี กองวิ, ชุติกาญจน์ ศรีษะ, ศิริลักษณ์ รัตน</div>
  <div class="row" style="position:relative">กาญจนา ภาสุรพันธ์; การขับเคลื่อนสถานศึกษาเพื่อการพัฒนาที่ยั่งยืน <span class="lat">(2565)</span></div>
  <div class="row" style="position:relative">สุภาวดี มณีเกษร; ผลของการน็อกเอาท์ยีนยูบิควิตินคอนจูเกต <span class="lat">(UBE2G1</span> และ <span class="lat">UBC</span></div>
  <div class="row" style="position:relative">พิสิษฐ์ ยอดวันดี; ภาวะผู้นำเชิงจริยธรรมของผู้บริหารสถานศึกษาขั้นพื้นฐาน <span class="lat">(2565</span></div>
 </div>
</div>
<svg class="a" style="left:962px;top:472px" width="10" height="9"><path d="M1 5 L3.5 8 L9 1" fill="none" stroke="#111" stroke-width="2"/></svg>
<div class="dt9" style="left:982px;top:471px">แหล่งข้อมูลที่อ้างถึง</div>
<div class="a" style="left:964px;top:488px;font-size:10px;font-weight:bold;line-height:13px;color:#111">?</div>
<div class="dt9" style="left:982px;top:489px">แหล่งข้อมูลพื้นที่ที่สำรองไว้</div>
<div class="a" style="left:500px;top:511px;width:780px;height:1px;background:#dcdcdc"></div>
<div class="a" style="left:494px;top:543px;width:786px;height:95px;background:#fff;border-top:1px solid #6b6b6b;border-bottom:1px solid #6b6b6b"></div>
<div class="a" style="left:494px;top:544px;width:786px;height:93px;overflow:hidden"><div class="dtr" style="right:8px;top:78px;text-decoration:underline">ศิรินธร อุทิศชลานนท์, สุนันทา สิงหการ. ภัทรนัย ไชยพรม. ไกรศร วงศ์ธิดา. และ ศิริวรรณ คำวงค์ษา. (2565). ความรู้ ทัศนคติ และ</div></div>
<div class="btn" style="left:1245px;top:655px;width:74px;height:24px;line-height:22px">ปิด</div>

<!-- EDIT SOURCE DIALOG -->
<div class="dlg" style="left:204px;top:403px;width:611px;height:391px;border-color:#5a5a5a"></div>
<div class="a" style="left:205px;top:404px;width:609px;height:30px;background:#fff"></div>
<div class="a" style="left:213px;top:412px;font-size:10px;line-height:14px;color:#111">แก้ไขแหล่งข้อมูล</div>
<div class="a" style="left:742px;top:411px;font-size:12px;line-height:14px;color:#111">?</div>
<svg class="a" style="left:784px;top:412px" width="13" height="13"><path d="M1 1 L12 12 M12 1 L1 12" stroke="#111" stroke-width="1.2"/></svg>
<div class="dt9" style="left:250px;top:446px;width:121px;text-align:right">ชนิดของแหล่งข้อมูล</div>
<div class="tb" style="left:380px;top:441px;width:131px;height:24px;border-color:#a0a0a0"></div>
<div class="a" style="left:382px;top:445px;width:110px;height:15px;background:#0078d7;outline:1px dotted #111;outline-offset:-1px"></div>
<div class="a" style="left:384px;top:446px;font-size:9.5px;line-height:13px;color:#fff">ส่วนของหนังสือ</div>
<div class="a" style="left:492px;top:442px;width:18px;height:22px;background:#e1e1e1;border-left:1px solid #c8c8c8"></div>
<svg class="a" style="left:496px;top:450px" width="10" height="6"><path d="M1 1 L5 5 L9 1" fill="none" stroke="#444" stroke-width="1"/></svg>
<div class="dt9" style="left:655px;top:446px"><u>ภ</u>าษา</div>
<div class="tb" style="left:689px;top:441px;width:119px;height:24px;border-color:#a0a0a0"></div>
<div class="dt9" style="left:692px;top:446px">ค่าเริ่มต้น</div>
<div class="a" style="left:790px;top:442px;width:17px;height:22px;background:#e1e1e1;border-left:1px solid #c8c8c8"></div>
<svg class="a" style="left:794px;top:450px" width="10" height="6"><path d="M1 1 L5 5 L9 1" fill="none" stroke="#444" stroke-width="1"/></svg>
<div class="a" style="left:211px;top:477px;width:596px;height:239px;border:1px solid #dcdcdc"></div>
<div class="dt9" style="left:214px;top:469px;background:#f0f0f0;padding:0 3px">เขตข้อมูลบรรณานุกรมสำหรับ <span class="lat">APA</span></div>
<div class="dt9" style="left:250px;top:494px;width:121px;text-align:right">ผู้เขียน</div>
<div class="tb" style="left:379px;top:490px;width:336px;height:21px;overflow:hidden"><div class="dt9" style="left:2px;top:3px">กตัญญู, จิติมา; กำแก่น, ปรางค์วลัย; ชุ่มริ, ญาณิศา; สิงหการ, สุนันทา; ไชยพรม, ภัทรนัย</div></div>
<div class="btn" style="left:724px;top:490px;width:74px;height:20px;line-height:18px">แก้ไข</div>
<div class="a" style="left:379px;top:517px;width:13px;height:13px;background:#fff;border:1px solid #333"></div>
<div class="dt9" style="left:396px;top:517px">ผู้เขียนที่เป็นองค์กร</div>
<div class="a" style="left:487px;top:515px;width:312px;height:21px;background:#f0f0f0;border:1px solid #cfcfcf"></div>
<div class="dt9" style="left:250px;top:544px;width:121px;text-align:right">ชื่อเรื่อง</div>
<div class="tb" style="left:379px;top:540px;width:420px;height:21px;overflow:hidden"><div class="dt9" style="left:2px;top:3px">ความรู้ ทัศนคติ และพฤติกรรมการดูแลตนเองของผู้ป่วยโรคเบาหวานที่ควบคุมระดับน้ำตาลในเลือดไม่ได้ทีม</div></div>
<div class="dt9" style="left:250px;top:569px;width:121px;text-align:right">ชื่อผู้เขียนหนังสือ</div>
<div class="tb" style="left:379px;top:565px;width:336px;height:21px"></div>
<div class="btn" style="left:724px;top:565px;width:74px;height:20px;line-height:18px">แก้ไข</div>
<div class="dt9" style="left:250px;top:594px;width:121px;text-align:right">ชื่อหนังสือ</div>
<div class="tb" style="left:379px;top:590px;width:420px;height:21px"><div class="dt9" style="left:2px;top:3px">การประชุมวิชาการและนำเสนอผลงานวิจัยระดับชาติ ครั้งที่ <span class="lat">20</span></div></div>
<div class="dt9" style="left:250px;top:619px;width:121px;text-align:right">ปี</div>
<div class="tb" style="left:379px;top:615px;width:420px;height:21px"><div class="dt9" style="left:2px;top:3px"><span class="lat">2565</span></div></div>
<div class="dt9" style="left:250px;top:644px;width:121px;text-align:right">หน้า</div>
<div class="tb" style="left:379px;top:640px;width:420px;height:21px"><div class="dt9" style="left:2px;top:3px"><span class="lat">xx-xx</span></div></div>
<div class="dt9" style="left:250px;top:669px;width:121px;text-align:right">เมือง</div>
<div class="tb" style="left:379px;top:665px;width:420px;height:21px"><div class="dt9" style="left:2px;top:3px">ปทุมธานี</div></div>
<div class="dt9" style="left:250px;top:694px;width:121px;text-align:right">ผู้จัดพิมพ์</div>
<div class="tb" style="left:379px;top:690px;width:420px;height:21px"><div class="dt9" style="left:2px;top:3px">มหาวิทยาลัยเวสเทิร์น</div></div>
<div class="a" style="left:211px;top:724px;width:13px;height:13px;background:#fff;border:1px solid #333"></div>
<div class="dt9" style="left:228px;top:724px">แสดงเขตข้อมูลทั้งหมด<u>ข</u>องบรรณานุกรม</div>
<div class="dt9" style="left:211px;top:744px">ชื่<u>อ</u>แท็ก</div>
<div class="tb" style="left:211px;top:762px;width:92px;height:21px"><div class="dt9" style="left:2px;top:3px">กต<span class="lat">65</span></div></div>
<div class="btn" style="left:649px;top:753px;width:74px;height:24px;line-height:20px;border:2px solid #0078d7">ตกลง</div>
<div class="btn" style="left:733px;top:753px;width:74px;height:24px;line-height:22px">ยกเลิก</div>

</body></html>
